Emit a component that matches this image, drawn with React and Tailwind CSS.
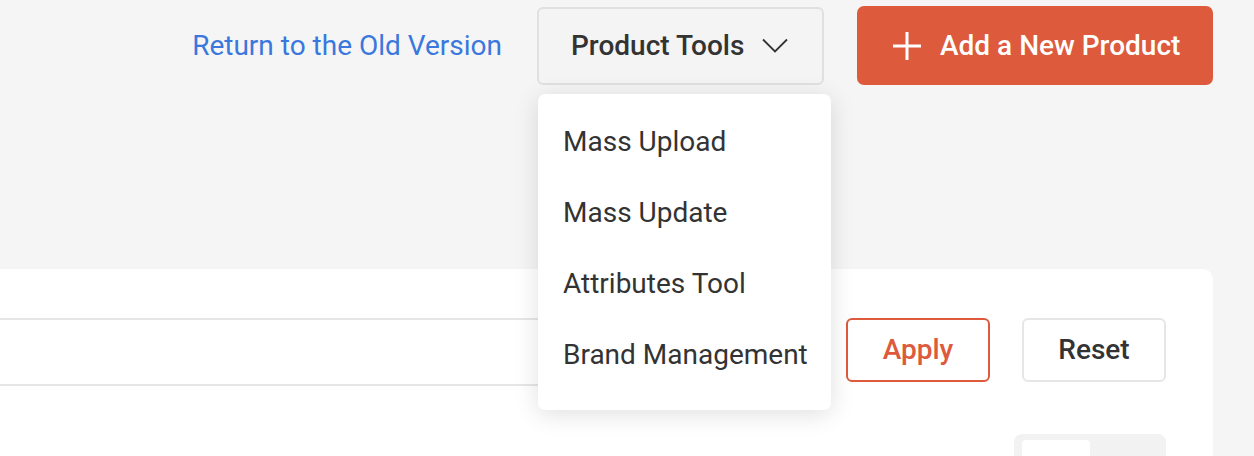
import React from 'react';

const menuItems = ['Mass Upload', 'Mass Update', 'Attributes Tool', 'Brand Management'];

const ChevronDown = () => (
  <svg width="26" height="16" viewBox="0 0 26 16" fill="none" stroke="#333" strokeWidth="1.8">
    <path d="M1 1.5 L13 13.5 L25 1.5" />
  </svg>
);

const Plus = () => (
  <svg width="28" height="28" viewBox="0 0 28 28" fill="none" stroke="#fff" strokeWidth="3">
    <path d="M14 0 V28 M0 14 H28" />
  </svg>
);

export default function App() {
  return (
    <div
      className="min-h-screen overflow-hidden bg-[#f5f5f5]"
      style={{ fontFamily: 'Roboto, "Liberation Sans", sans-serif' }}
    >
      {/* Header actions */}
      <div className="flex items-center justify-end pt-[6px] pr-[41px]">
        <a className="mr-[35px] text-[28px] text-[#3a78dd] leading-none">Return to the Old Version</a>

        <div className="relative mr-[33px]">
          <button className="flex h-[78px] w-[287px] items-center gap-[18px] rounded-[6px] border-2 border-[#e0e0e0] bg-[#f4f4f4] pl-[32px] text-[28px] font-medium text-[#333]">
            Product Tools
            <ChevronDown />
          </button>

          {/* Dropdown */}
          <div className="absolute left-[1px] top-[87px] z-10 w-[293px] rounded-[7px] bg-white pt-[13px] pb-[19px] shadow-[0_4px_24px_rgba(0,0,0,0.13)]">
            {menuItems.map((item) => (
              <div key={item} className="flex h-[71px] items-center pl-[25px] text-[28px] text-[#333]">
                {item}
              </div>
            ))}
          </div>
        </div>

        <button className="flex h-[79px] w-[356px] items-center gap-[19px] rounded-[7px] bg-[#dd5a3c] pl-[36px] text-[28px] font-medium text-white">
          <Plus />
          Add a New Product
        </button>
      </div>

      {/* Filter card */}
      <div className="mt-[184px] mr-[41px] rounded-r-[10px] bg-white pt-[49px] pr-[47px]">
        <div className="flex items-start gap-8">
          <div className="h-[68px] flex-1 border-y-2 border-[#e6e6e6]" />
          <button className="h-[64px] w-[144px] rounded-[6px] border-2 border-[#dd5a3c] text-[28px] font-medium text-[#dd5a3c]">
            Apply
          </button>
          <button className="h-[64px] w-[144px] rounded-[6px] border-2 border-[#e6e6e6] text-[28px] font-medium text-[#333]">
            Reset
          </button>
        </div>

        <div className="mt-[48px] flex justify-end">
          <div className="h-[40px] w-[152px] rounded-[8px] bg-[#f2f2f2] pt-[6px] pl-[8px]">
            <div className="h-[34px] w-[68px] rounded-[4px] bg-white" />
          </div>
        </div>
      </div>
    </div>
  );
}
